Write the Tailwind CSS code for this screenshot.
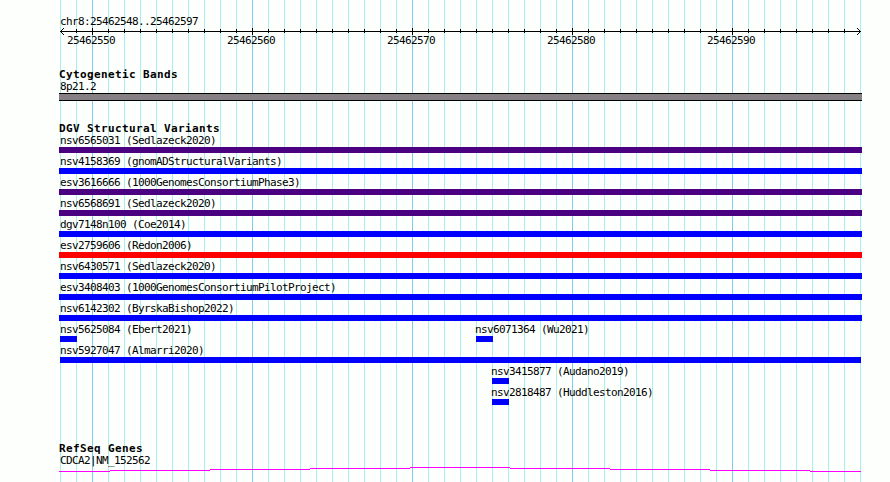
<!DOCTYPE html>
<html lang="en">
<head>
<meta charset="utf-8">
<title>chr8:25462548..25462597</title>
<script src="https://cdn.jsdelivr.net/npm/@tailwindcss/browser@4"></script>
</head>
<body class="bg-[#fdfffc]">
<main class="relative w-[890px] h-[482px] overflow-hidden text-black font-['DejaVu_Sans_Mono',monospace] text-[11px] leading-[13px] tracking-[-0.62px] whitespace-nowrap">
  <!-- position grid -->
  <svg class="absolute inset-0" width="890" height="482" shape-rendering="crispEdges">
    <defs>
      <pattern id="minor" x="60" y="0" width="16" height="482" patternUnits="userSpaceOnUse"><rect width="1" height="482" fill="#a8efee"/></pattern>
      <pattern id="major" x="92" y="0" width="160" height="482" patternUnits="userSpaceOnUse"><rect width="1" height="482" fill="#83cdf0"/></pattern>
    </defs>
    <rect x="60" width="801" height="482" fill="url(#minor)"/>
    <rect x="92" width="769" height="482" fill="url(#major)"/>
  </svg>

  <div class="relative flex flex-col pl-[59px] w-[862px]">
    <header class="pt-[15px] h-[68px]">
      <h1 class="pl-px h-[13px]">chr8:25462548..25462597</h1>
      <svg class="block w-[803px] h-[7px]" viewBox="59 28 803 7" shape-rendering="crispEdges">
        <defs>
          <pattern id="tick" x="60" y="28" width="16" height="7" patternUnits="userSpaceOnUse"><rect y="1" width="1" height="4" fill="#000"/></pattern>
          <pattern id="bigtick" x="92" y="28" width="160" height="7" patternUnits="userSpaceOnUse"><rect width="1" height="7" fill="#000"/></pattern>
        </defs>
        <rect x="60" y="31" width="801" height="1"/>
        <rect x="76" y="28" width="770" height="7" fill="url(#tick)"/>
        <rect x="92" y="28" width="769" height="7" fill="url(#bigtick)"/>
        <path d="M61 30h1v1h-1zM62 29h1v1h-1zM63 28h1v1h-1zM61 32h1v1h-1zM62 33h1v1h-1zM63 34h1v1h-1zM859 30h1v1h-1zM858 29h1v1h-1zM857 28h1v1h-1zM859 32h1v1h-1zM858 33h1v1h-1zM857 34h1v1h-1z"/>
      </svg>
      <div class="flex pl-[8px] -mt-px h-[13px]">
        <span class="w-[160px]">25462550</span><span class="w-[160px]">25462560</span><span class="w-[160px]">25462570</span><span class="w-[160px]">25462580</span><span>25462590</span>
      </div>
    </header>

    <section class="h-[54px]">
      <h2 class="h-[12px] font-bold tracking-[0.38px]">Cytogenetic Bands</h2>
      <p class="pl-px h-[13px]">8p21.2</p>
      <div class="h-[8px] bg-[#848084] border-y border-black"></div>
    </section>

    <section class="h-[320px]">
      <h2 class="h-[12px] font-bold tracking-[0.38px]">DGV Structural Variants</h2>
      <div class="h-[21px]"><p class="pl-px h-[13px]">nsv6565031 (Sedlazeck2020)</p><div class="h-[6px] bg-[#4b0082]"></div></div>
      <div class="h-[21px]"><p class="pl-px h-[13px]">nsv4158369 (gnomADStructuralVariants)</p><div class="h-[6px] bg-[#0000ff]"></div></div>
      <div class="h-[21px]"><p class="pl-px h-[13px]">esv3616666 (1000GenomesConsortiumPhase3)</p><div class="h-[6px] bg-[#4b0082]"></div></div>
      <div class="h-[21px]"><p class="pl-px h-[13px]">nsv6568691 (Sedlazeck2020)</p><div class="h-[6px] bg-[#4b0082]"></div></div>
      <div class="h-[21px]"><p class="pl-px h-[13px]">dgv7148n100 (Coe2014)</p><div class="h-[6px] bg-[#0000ff]"></div></div>
      <div class="h-[21px]"><p class="pl-px h-[13px]">esv2759606 (Redon2006)</p><div class="h-[6px] bg-[#ff0000]"></div></div>
      <div class="h-[21px]"><p class="pl-px h-[13px]">nsv6430571 (Sedlazeck2020)</p><div class="h-[6px] bg-[#0000ff]"></div></div>
      <div class="h-[21px]"><p class="pl-px h-[13px]">esv3408403 (1000GenomesConsortiumPilotProject)</p><div class="h-[6px] bg-[#0000ff]"></div></div>
      <div class="h-[21px]"><p class="pl-px h-[13px]">nsv6142302 (ByrskaBishop2022)</p><div class="h-[6px] bg-[#0000ff]"></div></div>
      <div class="h-[21px] flex pl-px">
        <div class="w-[416px]"><p class="h-[13px]">nsv5625084 (Ebert2021)</p><div class="w-[17px] h-[6px] bg-[#0000ff]"></div></div>
        <div><p class="h-[13px] -ml-px">nsv6071364 (Wu2021)</p><div class="w-[17px] h-[6px] bg-[#0000ff]"></div></div>
      </div>
      <div class="h-[21px] px-px"><p class="h-[13px]">nsv5927047 (Almarri2020)</p><div class="h-[6px] bg-[#0000ff]"></div></div>
      <div class="h-[21px] pl-[433px]"><p class="h-[13px] -ml-px">nsv3415877 (Audano2019)</p><div class="w-[17px] h-[6px] bg-[#0000ff]"></div></div>
      <div class="h-[21px] pl-[433px]"><p class="h-[13px] -ml-px">nsv2818487 (Huddleston2016)</p><div class="w-[17px] h-[6px] bg-[#0000ff]"></div></div>
    </section>

    <section>
      <h2 class="h-[12px] font-bold tracking-[0.38px]">RefSeq Genes</h2>
      <p class="pl-px h-[13px]">CDCA2|NM_152562</p>
      <svg class="block w-[803px] h-[5px]" viewBox="59 467 803 5" shape-rendering="crispEdges" fill="#ff00ff">
        <path d="M59 471h51v1h-51zM110 470h100v1h-100zM210 469h100v1h-100zM310 468h100v1h-100zM410 467h100v1h-100zM510 468h100v1h-100zM610 469h100v1h-100zM710 470h100v1h-100zM810 471h51v1h-51z"/>
      </svg>
    </section>
  </div>
</main>
</body>
</html>
